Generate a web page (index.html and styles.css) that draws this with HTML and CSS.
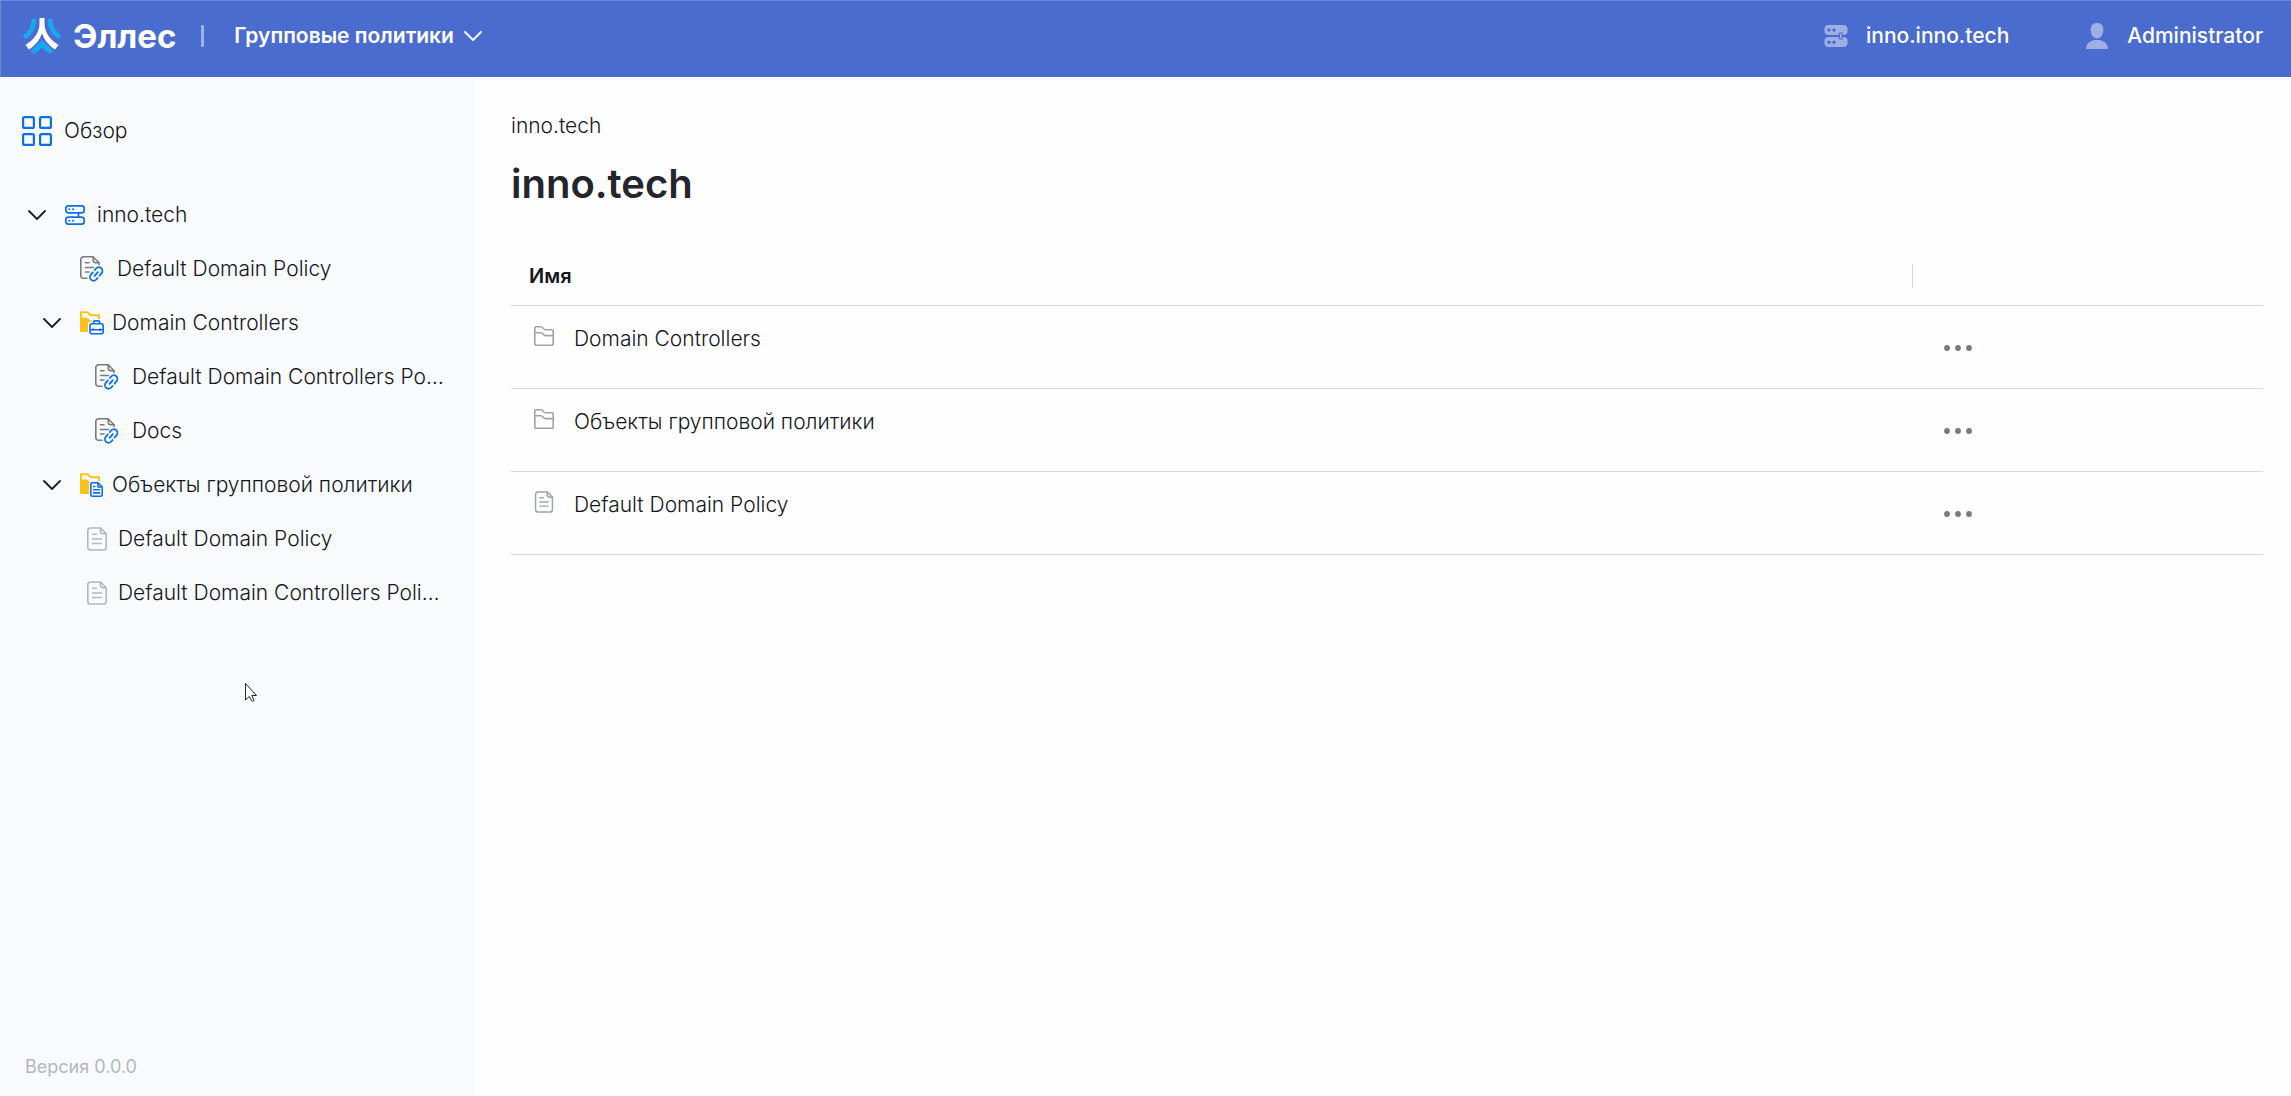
FILE: index.html
```html
<!DOCTYPE html>
<html lang="ru">
<head>
    <meta charset="UTF-8">
    <meta name="viewport" content="width=device-width, initial-scale=1.0">
    <title>Эллес - Групповые политики</title>
    <link rel="stylesheet" href="styles.css">
</head>
<body>
    <!-- Иконки -->
    <svg class="sprite" aria-hidden="true">
        <symbol id="chevron" viewBox="0 0 18 12">
            <path d="M1 2l8 8 8-8" fill="none" stroke="currentColor" stroke-width="1.8" stroke-linecap="round" stroke-linejoin="round"/>
        </symbol>
        <symbol id="server" viewBox="0 0 20 20">
            <g fill="none" stroke="currentColor" stroke-width="1.7">
                <rect x="0.8" y="0.8" width="18.4" height="7" rx="2.6"/>
                <rect x="0.8" y="12.2" width="18.4" height="7" rx="2.6"/>
                <path d="M13.5 7.5v5"/>
            </g>
            <g fill="currentColor">
                <circle cx="4.3" cy="4.2" r="1"/>
                <circle cx="8" cy="4.2" r="1"/>
                <circle cx="4.3" cy="15.8" r="1"/>
                <circle cx="8" cy="15.8" r="1"/>
            </g>
        </symbol>
        <symbol id="doc" viewBox="0 0 20 24">
            <g fill="none" stroke="currentColor" stroke-width="1.6" stroke-linecap="round" stroke-linejoin="round">
                <path d="M13.5 1H3.5A2.8 2.8 0 0 0 .8 3.8v16.4A2.8 2.8 0 0 0 3.5 23h13a2.8 2.8 0 0 0 2.7-2.8V6.7z"/>
                <path d="M13.5 1v3.2a2.5 2.5 0 0 0 2.5 2.5h3.2M5.6 7.3h3.6M5.6 12h8.8M5.6 16.5h8.8"/>
            </g>
        </symbol>
        <symbol id="doc-link" viewBox="0 0 24 26">
            <g fill="none" stroke="#777b82" stroke-width="1.6" stroke-linecap="round" stroke-linejoin="round">
                <path d="M7 22.3H3.6A2.7 2.7 0 0 1 .8 19.5v-16A2.7 2.7 0 0 1 3.6.8H13l6 6v1.7"/>
                <path d="M13.3 1v3.3a2.4 2.4 0 0 0 2.4 2.4H19M5.5 6.7H9M5.5 11.5h8M5.5 16H9"/>
            </g>
            <g transform="translate(16.2 18) rotate(-50)" fill="none" stroke="#0a6fe8" stroke-width="1.8" stroke-linecap="round">
                <path d="M-2.2 3.6h-1.9a3.6 3.6 0 0 1 0-7.2h3.2"/>
                <path d="M2.2-3.6h1.9a3.6 3.6 0 0 1 0 7.2H.9"/>
                <path d="M-2.5 0h5"/>
            </g>
        </symbol>
        <symbol id="folder-fill" viewBox="0 0 24 24">
            <path d="M1 7V1.3h6.5l3.5 3h8V8" fill="none" stroke="#fcc21b" stroke-width="2" stroke-linejoin="round"/>
            <path d="M0 6.5h6.5l4 3H13V21H1.5A1.5 1.5 0 0 1 0 19.5z" fill="#fcc21b"/>
        </symbol>
        <symbol id="folder-case" viewBox="0 0 24 24">
            <use href="#folder-fill"/>
            <rect x="8" y="10.5" width="16" height="13.5" rx="3" fill="#f9fafc"/>
            <g fill="none" stroke="#0a6fe8" stroke-width="1.6" stroke-linejoin="round">
                <rect x="10" y="12.8" width="13.2" height="10" rx="2"/>
                <path d="M13.5 12.5v-1.1A1.5 1.5 0 0 1 15 9.9h3.2a1.5 1.5 0 0 1 1.5 1.5v1.1M10 18.8h13.2M13 17.5V20M20.2 17.5V20"/>
            </g>
        </symbol>
        <symbol id="folder-doc" viewBox="0 0 24 24">
            <use href="#folder-fill"/>
            <rect x="9" y="8" width="15" height="16" rx="3" fill="#f9fafc"/>
            <g fill="none" stroke="#0a6fe8" stroke-width="1.6" stroke-linejoin="round">
                <path d="M18 9.8h-5.2a2 2 0 0 0-2 2v9.4a2 2 0 0 0 2 2h7.4a2 2 0 0 0 2-2V14z"/>
                <path d="M18 9.8V14h4.2M13 13.5h2.5M13 16.7h7M13 19.9h7"/>
            </g>
        </symbol>
        <symbol id="folder" viewBox="0 0 20 20">
            <g fill="none" stroke="currentColor" stroke-width="1.6" stroke-linejoin="round">
                <path d="M.8 18V2A1.2 1.2 0 0 1 2 .8h4.6c2.3 0 2.8 2.9 5 2.9H18a1.2 1.2 0 0 1 1.2 1.2V18a1.2 1.2 0 0 1-1.2 1.2H2A1.2 1.2 0 0 1 .8 18z"/>
                <path d="M.8 6.7h5.8c2.3 0 2.8 2.9 5 2.9h7.6"/>
            </g>
        </symbol>
        <symbol id="dots" viewBox="0 0 28 6">
            <g fill="#757982">
                <circle cx="3" cy="3" r="2.9"/>
                <circle cx="14" cy="3" r="2.9"/>
                <circle cx="25" cy="3" r="2.9"/>
            </g>
        </symbol>
    </svg>

    <header class="header">
        <a class="logo" href="#">
            <svg class="logo-icon" viewBox="0 0 38 36" aria-hidden="true">
                <g fill="none" stroke="#16a9f0" stroke-width="4.6">
                    <path d="M10.8 1v2c0 6-3.5 12-9.6 16.5"/>
                    <path d="M27.2 1v2c0 6 3.5 12 9.6 16.5"/>
                </g>
                <path d="M19 22l11.5 11-4 3-7.5-6.5-7.5 6.5-4-3z" fill="#16a9f0"/>
                <path d="M16.5 0h5v5c0 9 5 16.5 14 22L32 31.500C26 27.500 21 22 19 15c-2 7-7 12.500-13 16.500L2.500 27c9-5.500 14-13 14-22z" fill="#fff"/>
            </svg>
            <span>Эллес</span>
        </a>
        <span class="divider"></span>
        <button class="section-menu" type="button">
            Групповые политики
            <svg class="chevron" aria-hidden="true"><use href="#chevron"/></svg>
        </button>
        <div class="account">
            <a class="account-link" href="#">
                <svg class="account-icon" viewBox="0 0 24 24" aria-hidden="true">
                    <rect x="0.5" y="1" width="23" height="10" rx="4" fill="#9dafe4"/>
                    <rect x="0.5" y="13" width="23" height="10" rx="4" fill="#9dafe4"/>
                    <g fill="#4a6cce">
                        <circle cx="5" cy="6" r="1.7"/>
                        <circle cx="10" cy="6" r="1.7"/>
                        <circle cx="5" cy="18.3" r="1.7"/>
                        <circle cx="10" cy="18.3" r="1.7"/>
                    </g>
                    <rect x="14.6" y="8.2" width="4.4" height="7.6" rx="2.2" fill="#4a6cce"/>
                    <path d="M16.8 9.5v5" stroke="#9dafe4" stroke-width="1.8"/>
                </svg>
                inno.inno.tech
            </a>
            <button class="account-link" type="button">
                <svg class="account-icon" viewBox="0 0 24 26" aria-hidden="true">
                    <path d="M12 0c3.8 0 6.3 2.5 6.3 6.5 0 5-2.5 9-6.3 9s-6.3-4-6.3-9C5.7 2.5 8.2 0 12 0z" fill="#9dafe4"/>
                    <path d="M1 26c.5-6.5 5-9 11-9s10.500 2.500 11 9z" fill="#9dafe4"/>
                </svg>
                Administrator
            </button>
        </div>
    </header>

    <div class="layout">
        <aside class="sidebar">
            <a class="overview" href="#">
                <svg class="overview-icon" viewBox="0 0 30 30" aria-hidden="true">
                    <g fill="none" stroke="#0a6fe8" stroke-width="2.2">
                        <rect x="1.1" y="1.1" width="10.8" height="10.8" rx="1.5"/>
                        <rect x="18.1" y="1.1" width="10.8" height="10.8" rx="1.5"/>
                        <rect x="1.1" y="18.1" width="10.8" height="10.8" rx="1.5"/>
                        <rect x="18.1" y="18.1" width="10.8" height="10.8" rx="1.5"/>
                    </g>
                </svg>
                Обзор
            </a>

            <nav class="tree">
                <div class="node root">
                    <button class="toggle" type="button" aria-label="Свернуть"><svg class="chevron" aria-hidden="true"><use href="#chevron"/></svg></button>
                    <svg class="icon-server" aria-hidden="true"><use href="#server"/></svg>
                    <a href="#">inno.tech</a>
                </div>
                <div class="node link">
                    <svg class="icon-link" aria-hidden="true"><use href="#doc-link"/></svg>
                    <a href="#">Default Domain Policy</a>
                </div>
                <div class="node folder">
                    <button class="toggle" type="button" aria-label="Свернуть"><svg class="chevron" aria-hidden="true"><use href="#chevron"/></svg></button>
                    <svg class="icon-folder" aria-hidden="true"><use href="#folder-case"/></svg>
                    <a href="#">Domain Controllers</a>
                </div>
                <div class="node link nested">
                    <svg class="icon-link" aria-hidden="true"><use href="#doc-link"/></svg>
                    <a href="#">Default Domain Controllers Policy</a>
                </div>
                <div class="node link nested">
                    <svg class="icon-link" aria-hidden="true"><use href="#doc-link"/></svg>
                    <a href="#">Docs</a>
                </div>
                <div class="node folder">
                    <button class="toggle" type="button" aria-label="Свернуть"><svg class="chevron" aria-hidden="true"><use href="#chevron"/></svg></button>
                    <svg class="icon-folder" aria-hidden="true"><use href="#folder-doc"/></svg>
                    <a href="#">Объекты групповой политики</a>
                </div>
                <div class="node object">
                    <svg class="icon-doc" aria-hidden="true"><use href="#doc"/></svg>
                    <a href="#">Default Domain Policy</a>
                </div>
                <div class="node object">
                    <svg class="icon-doc" aria-hidden="true"><use href="#doc"/></svg>
                    <a href="#">Default Domain Controllers Policy</a>
                </div>
            </nav>

            <div class="version">Версия 0.0.0</div>

            <svg class="cursor" viewBox="0 0 12 19" aria-hidden="true">
                <path d="M.5.5V17l3.8-3.5 2.4 4.3c.4.9 2.6.2 2.2-1l-2.1-4.300h4.700z" fill="#fff" stroke="#222"/>
            </svg>
        </aside>

        <main class="content">
            <div class="breadcrumbs"><a href="#">inno.tech</a></div>
            <h1>inno.tech</h1>
            <table class="objects">
                <thead>
                    <tr>
                        <th scope="col"><div class="head-cell">Имя</div></th>
                        <th class="col-actions"></th>
                    </tr>
                </thead>
                <tbody>
                    <tr>
                        <td>
                            <a class="object-name" href="#"><svg class="icon-row" aria-hidden="true"><use href="#folder"/></svg>Domain Controllers</a>
                        </td>
                        <td class="col-actions"><button class="more" type="button" aria-label="Действия"><svg aria-hidden="true"><use href="#dots"/></svg></button></td>
                    </tr>
                    <tr>
                        <td>
                            <a class="object-name" href="#"><svg class="icon-row" aria-hidden="true"><use href="#folder"/></svg>Объекты групповой политики</a>
                        </td>
                        <td class="col-actions"><button class="more" type="button" aria-label="Действия"><svg aria-hidden="true"><use href="#dots"/></svg></button></td>
                    </tr>
                    <tr>
                        <td>
                            <a class="object-name" href="#"><svg class="icon-row" aria-hidden="true"><use href="#doc"/></svg>Default Domain Policy</a>
                        </td>
                        <td class="col-actions"><button class="more" type="button" aria-label="Действия"><svg aria-hidden="true"><use href="#dots"/></svg></button></td>
                    </tr>
                </tbody>
            </table>
        </main>
    </div>
</body>
</html>
```
FILE: styles.css
```css
* {
    box-sizing: border-box;
}
body {
    margin: 0;
    min-height: 100vh;
    display: flex;
    flex-direction: column;
    font-family: Inter, "Liberation Sans", sans-serif;
    font-size: 21px;
    font-weight: 300;
    line-height: 28px;
    color: #14161c;
    background-color: #fefefe;
}
a {
    color: inherit;
    text-decoration: none;
}
button {
    font: inherit;
    color: inherit;
    background: none;
    border: 0;
    padding: 0;
    cursor: pointer;
}
svg {
    display: block;
    flex-shrink: 0;
}
.sprite {
    position: absolute;
    width: 0;
    height: 0;
}
.chevron {
    width: 18px;
    height: 12px;
}

/* Шапка */
.header {
    display: flex;
    align-items: center;
    height: 77px;
    padding: 0 28px 6px 22px;
    color: #fff;
    background-color: #4a6cce;
    border-top: 1px solid #6b87d6;
    border-left: 1px solid #6b87d6;
}
.logo {
    display: flex;
    align-items: center;
    gap: 12px;
    font-size: 33px;
    font-weight: 700;
}
.logo-icon {
    width: 38px;
    height: 36px;
}
.divider {
    width: 3px;
    height: 22px;
    margin: 0 30px 0 25px;
    border-radius: 1px;
    background-color: #9dafe4;
}
.section-menu {
    display: flex;
    align-items: center;
    gap: 10px;
    font-weight: 600;
}
.account {
    display: flex;
    gap: 76px;
    margin-left: auto;
    font-weight: 500;
}
.account-link {
    display: flex;
    align-items: center;
    gap: 18px;
}
.account-icon {
    width: 24px;
    height: 26px;
}

/* Боковая панель */
.layout {
    flex: 1;
    display: flex;
}
.sidebar {
    position: relative;
    display: flex;
    flex-direction: column;
    flex: 0 0 475px;
    min-width: 0;
    padding: 36px 30px 15px 22px;
    background-color: #f9fafc;
}
.overview {
    display: flex;
    align-items: center;
    gap: 12px;
    height: 36px;
    margin-bottom: 39px;
}
.overview-icon {
    width: 30px;
    height: 30px;
}
.node {
    display: flex;
    align-items: center;
    height: 54px;
}
.node a {
    overflow: hidden;
    white-space: nowrap;
    text-overflow: ellipsis;
}
.toggle {
    color: #1c1e22;
}
.root {
    padding-left: 6px;
}
.folder {
    padding-left: 21px;
}
.link {
    padding-left: 58px;
}
.nested {
    padding-left: 73px;
}
.object {
    padding: 0 4px 0 65px;
}
.icon-server {
    width: 20px;
    height: 20px;
    margin: 0 12px 0 19px;
    color: #0a6fe8;
}
.icon-link {
    width: 24px;
    height: 26px;
    margin-right: 13px;
}
.icon-folder {
    width: 24px;
    height: 24px;
    margin: 0 8px 0 19px;
}
.icon-doc {
    width: 20px;
    height: 24px;
    margin-right: 11px;
    color: #b5b7bd;
}
.version {
    margin-top: auto;
    padding-left: 3px;
    font-size: 18px;
    font-weight: 400;
    color: #b4b7bd;
}
.cursor {
    position: absolute;
    left: 245px;
    top: 606px;
    width: 12px;
    height: 19px;
}

/* Содержимое */
.content {
    flex: 1;
    min-width: 0;
    padding: 35px 28px 0 36px;
}
h1 {
    margin: 18px 0 38px;
    font-size: 40px;
    line-height: 52px;
    font-weight: 600;
    color: #23262d;
}
.objects {
    width: 100%;
    table-layout: fixed;
    border-collapse: separate;
    border-spacing: 0;
}
.objects th {
    padding: 16px 0 17px;
    text-align: left;
    font-weight: 600;
    font-size: 20px;
    line-height: 24px;
    border-bottom: 1px solid #d6d7da;
}
.objects td {
    height: 83px;
    padding: 19px 0 0 23px;
    vertical-align: top;
    border-bottom: 1px solid #d6d7da;
}
.head-cell {
    padding-left: 18px;
    border-right: 1px solid #d6d7da;
}
.objects .col-actions {
    width: 20%;
}
.objects td.col-actions {
    padding: 2px 0 0 31px;
    vertical-align: middle;
}
.object-name {
    display: flex;
    gap: 20px;
}
.icon-row {
    width: 20px;
    height: 22px;
    color: #9fa4aa;
}
.more {
    display: block;
}
.more svg {
    width: 28px;
    height: 6px;
}
```
